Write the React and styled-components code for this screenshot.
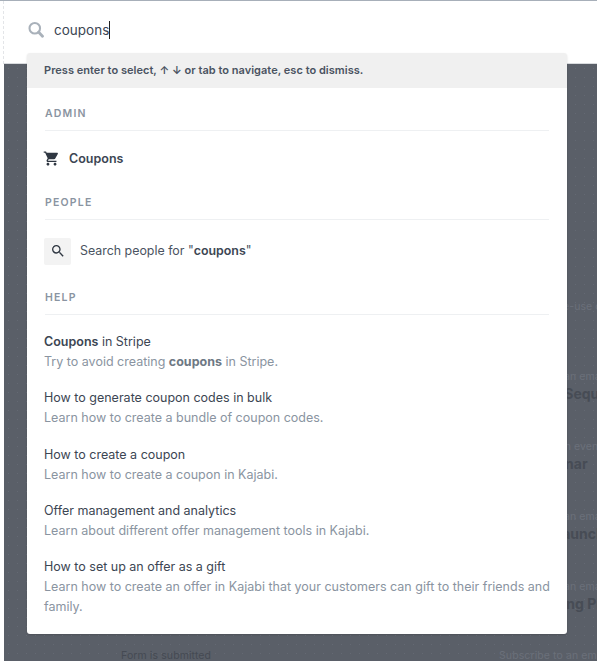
import React from "react";
import styled, { createGlobalStyle } from "styled-components";
import { MdShoppingCart, MdSearch } from "react-icons/md";

const GlobalStyle = createGlobalStyle`
    html, body, #root {
        margin: 0;
        height: 100%;
    }
    body {
        font-family: Inter, "Noto Sans", sans-serif;
        background-color: #fff;
        overflow: hidden;
        -webkit-font-smoothing: antialiased;
    }
`

const Page = styled.div`
    position: relative;
    display: flex;
    flex-direction: column;
    height: 661px;
    padding-left: 3px;
    box-sizing: border-box;
    border-top: 1px solid #a7afb9;
    overflow: hidden;
`

const SearchBar = styled.div`
    display: flex;
    align-items: center;
    gap: 10px;
    flex: 0 0 63px;
    padding: 0 0 5px 24px;
    box-sizing: border-box;
    border-left: 1px dashed #e3e5e8;
    border-bottom: 1px solid #d9dbde;
`

const Query = styled.span`
    font-size: 13.5px;
    color: #3c4653;
    line-height: 18px;
    border-right: 1px solid #222;
`

const Canvas = styled.div`
    flex: 1;
    margin-left: 1px;
    background-color: #5a5f68;
    background-image: radial-gradient(#646973 0.7px, transparent 0.8px);
    background-size: 9px 9px;
    padding: 235px 0 0 0;
    overflow: hidden;
`

const CanvasColumn = styled.div`
    display: flex;
    flex-direction: column;
    margin-left: 493px;
    width: 200px;
`

const CanvasNode = styled.div`
    height: 70px;
    flex-shrink: 0;
    white-space: nowrap;
`

const NodeCaption = styled.div`
    font-size: 10.5px;
    line-height: 16px;
    letter-spacing: 0.1px;
    white-space: nowrap;
    color: #6b707a;
`

const NodeTitle = styled.div`
    font-size: 14px;
    line-height: 18px;
    font-weight: 700;
    color: #474c55;
`

const BottomCaption = styled(NodeCaption)`
    position: absolute;
    bottom: -3px;
    left: ${(p) => p.$left}px;
    color: ${(p) => p.$color};
`

const Dropdown = styled.div`
    position: absolute;
    top: 52px;
    left: 27px;
    width: 540px;
    height: 581px;
    background-color: #fff;
    border-radius: 3px;
    overflow: hidden;
    box-shadow: 0 1px 2px rgba(0, 0, 0, 0.15);
`

const Hint = styled.div`
    height: 35px;
    padding: 0 0 1px 17px;
    box-sizing: border-box;
    display: flex;
    align-items: center;
    background-color: #f0f0f0;
    font-size: 11px;
    letter-spacing: 0.03px;
    font-weight: 600;
    color: #4a5361;
`

const Section = styled.div`
    padding: 0 18px;
`

const SectionLabel = styled.div`
    padding-top: ${(p) => p.$top}px;
    padding-bottom: 7px;
    font-size: 10.5px;
    line-height: 18px;
    font-weight: 600;
    letter-spacing: 1.2px;
    color: #8a94a1;
    border-bottom: 1px solid #eef0f2;
`

const AdminRow = styled.div`
    display: flex;
    align-items: center;
    gap: 9px;
    height: 55px;
    margin-left: -2px;
    font-size: 12.5px;
    font-weight: 600;
    color: #3c4653;

    svg {
        font-size: 17px;
        color: #2f3742;
    }
`

const PeopleRow = styled.div`
    display: flex;
    align-items: center;
    gap: 9px;
    height: 62px;
    margin-left: -1px;
`

const PeopleText = styled.span`
    padding-bottom: 1px;
    font-size: 12.4px;
    color: #4a5361;

    b {
        font-weight: 600;
        color: #3c4653;
    }
`

const IconTile = styled.div`
    display: flex;
    align-items: center;
    justify-content: center;
    width: 27px;
    height: 27px;
    border-radius: 2px;
    background-color: #f3f3f3;

    svg {
        font-size: 16px;
        color: #2f3742;
    }
`

const HelpList = styled.div`
    display: flex;
    flex-direction: column;
    gap: 16.25px;
    padding-top: 17px;
    margin: 0 -6px 0 -1px;
`

const HelpTitle = styled.div`
    font-size: 12.5px;
    line-height: 20px;
    color: #3c4653;

    b {
        font-weight: 600;
    }
`

const HelpText = styled.div`
    font-size: 12.5px;
    line-height: 20px;
    color: #8a94a1;

    b {
        font-weight: 700;
        color: #6e7884;
    }
`

const canvasNodes = [
    ["Redeem a one-use coupon", "Free Gifts"],
    ["Subscribe to an email", "Welcome Sequence"],
    ["Register for an event", "Free Webinar"],
    ["Subscribe to an email", "Product Launch"],
    ["Subscribe to an email", "Remarketing Pipeline"],
]

const helpArticles = [
    { title: <><b>Coupons</b> in Stripe</>, text: <>Try to avoid creating <b>coupons</b> in Stripe.</> },
    { title: "How to generate coupon codes in bulk", text: "Learn how to create a bundle of coupon codes." },
    { title: "How to create a coupon", text: "Learn how to create a coupon in Kajabi." },
    { title: "Offer management and analytics", text: "Learn about different offer management tools in Kajabi." },
    { title: "How to set up an offer as a gift", text: "Learn how to create an offer in Kajabi that your customers can gift to their friends and family." },
]

const SearchGlyph = () => (
    <svg width="16" height="17" viewBox="0 0 17 17" fill="none" stroke="#a9b1ba">
        <circle cx="7.2" cy="7.2" r="5.6" strokeWidth="2.2" />
        <path d="M11.4 11.4L15.4 15.6" strokeWidth="3" strokeLinecap="round" />
    </svg>
)

export default function App() {
    return (
        <>
            <GlobalStyle />
            <Page>
                <SearchBar>
                    <SearchGlyph />
                    <Query>coupons</Query>
                </SearchBar>
                <Canvas>
                    <CanvasColumn>
                        {canvasNodes.map(([caption, title], i) => (
                            <CanvasNode key={i}>
                                <NodeCaption>{caption}</NodeCaption>
                                <NodeTitle>{title}</NodeTitle>
                            </CanvasNode>
                        ))}
                    </CanvasColumn>
                </Canvas>
                <BottomCaption $left={121} $color="#454a53">Form is submitted</BottomCaption>
                <BottomCaption $left={499} $color="#6b707a">Subscribe to an email</BottomCaption>
                <Dropdown>
                    <Hint>Press enter to select, ↑ ↓ or tab to navigate, esc to dismiss.</Hint>
                    <Section>
                        <SectionLabel $top={17}>ADMIN</SectionLabel>
                        <AdminRow><MdShoppingCart />Coupons</AdminRow>
                        <SectionLabel $top={8}>PEOPLE</SectionLabel>
                        <PeopleRow>
                            <IconTile><MdSearch /></IconTile>
                            <PeopleText>Search people for "<b>coupons</b>"</PeopleText>
                        </PeopleRow>
                        <SectionLabel $top={7}>HELP</SectionLabel>
                        <HelpList>
                            {helpArticles.map((article, i) => (
                                <div key={i}>
                                    <HelpTitle>{article.title}</HelpTitle>
                                    <HelpText>{article.text}</HelpText>
                                </div>
                            ))}
                        </HelpList>
                    </Section>
                </Dropdown>
            </Page>
        </>
    )
}
